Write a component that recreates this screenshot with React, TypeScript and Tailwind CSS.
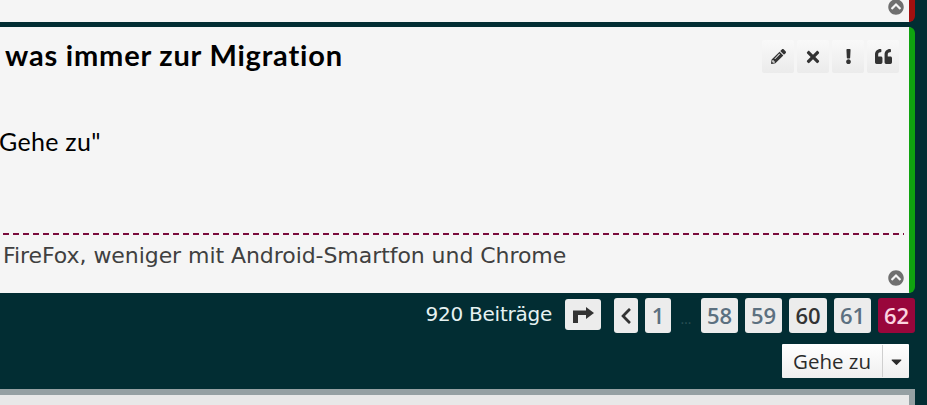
import React from "react";
import { FaChevronCircleUp, FaChevronLeft, FaExclamation, FaPencilAlt, FaQuoteLeft, FaTimes, FaCaretDown } from "react-icons/fa";

const actions = [
  { label: "Bearbeiten", icon: <FaPencilAlt size={15} /> },
  { label: "Löschen", icon: <FaTimes size={18} /> },
  { label: "Melden", icon: <FaExclamation size={15} /> },
  { label: "Zitieren", icon: <FaQuoteLeft size={17} /> },
];

const pageBtn = "flex h-[35px] items-center justify-center rounded-[3px] text-[22px] font-semibold";

const App: React.FC = () => {
  return (
    <div className="flex h-[405px] w-[927px] flex-col overflow-hidden bg-[#022d33] font-['Open_Sans',sans-serif]">
      {/* previous post, only its bottom edge is visible */}
      <div className="relative mr-[12px] h-[22px] shrink-0 rounded-br-[6px] border-r-[6px] border-[#a30f0f] bg-[#f5f5f5]">
        <FaChevronCircleUp size={16} className="absolute right-[5px] bottom-[7px] text-[#6f6f6f]" />
      </div>

      {/* post */}
      <div className="relative mt-[5px] mr-[12px] flex h-[266px] shrink-0 flex-col rounded-r-[6px] border-r-[6px] border-[#0fa30f] bg-[#f5f5f5]">
        <div className="flex items-start justify-between pt-[13px] pr-[10px]">
          <h2 className="pl-[5px] font-['Lato',sans-serif] text-[29px] leading-[30px] font-bold tracking-[0.8px] text-black">was immer zur Migration</h2>
          <div className="flex gap-[3px]">
            {actions.map((a) => (
              <button key={a.label} aria-label={a.label} className="flex h-[33px] w-[32px] items-center justify-center rounded-[2px] bg-gradient-to-b from-[#f9f9f9] to-[#ebebeb] text-[#333]">
                {a.icon}
              </button>
            ))}
          </div>
        </div>
        <p className="mt-[53px] -ml-px font-['Lato',sans-serif] text-[25px] leading-[30px] tracking-[0.3px] text-black">Gehe zu"</p>
        <div className="mt-[77px] mr-[5px] h-[2px] bg-[repeating-linear-gradient(90deg,transparent_0,transparent_3px,#7a0c3d_3px,#7a0c3d_9px,transparent_9px,transparent_10px)]" />
        <p className="mt-[8px] pl-[3px] font-['DejaVu_Sans',sans-serif] text-[22px] leading-[26px] tracking-[-0.06px] text-[#404040]">FireFox, weniger mit Android-Smartfon und Chrome</p>
        <FaChevronCircleUp size={16} className="absolute right-[5px] bottom-[7px] text-[#6f6f6f]" />
      </div>

      {/* pagination */}
      <div className="mt-[5px] mr-[12px] flex shrink-0 items-center justify-end">
        <span className="mr-[13px] -translate-y-[2px] font-['DejaVu_Sans',sans-serif] text-[20px] tracking-[-0.25px] text-[#e6f2f2]">920 Beiträge</span>
        <button aria-label="Springen" className="mr-[13px] flex h-[31px] w-[36px] -translate-y-[1px] items-center justify-center rounded-[3px] bg-[#ececec] text-[#333]">
          <svg width="21" height="16" viewBox="0 0 21 16" fill="currentColor">
            <path d="M13 0l8 6-8 6V8H5v8H0V3.500h13z" />
          </svg>
        </button>
        <button aria-label="Zurück" className={`${pageBtn} mr-[7px] w-[24px] bg-[#ececec] text-[#333]`}>
          <FaChevronLeft size={18} />
        </button>
        <button className={`${pageBtn} w-[26px] bg-[#ececec] text-[#5c7080]`}>1</button>
        <span className="w-[30px] pt-[6px] text-center text-[14px] text-[#2a5055]">…</span>
        <div className="flex gap-[7px]">
          <button className={`${pageBtn} w-[37px] bg-[#ececec] text-[#5c7080]`}>58</button>
          <button className={`${pageBtn} w-[37px] bg-[#ececec] text-[#5c7080]`}>59</button>
          <button className={`${pageBtn} w-[38px] bg-[#ececec] text-[#333]`}>60</button>
          <button className={`${pageBtn} w-[37px] bg-[#ececec] text-[#5c7080]`}>61</button>
          <button className={`${pageBtn} w-[37px] bg-[#99063b] font-normal text-[#fbd4e0]`}>62</button>
        </div>
      </div>

      <div className="mt-[11px] mr-[18px] flex shrink-0 justify-end">
        <button className="flex h-[34px] w-[127px] items-center rounded-[1px] bg-gradient-to-b from-white to-[#efefef] text-[#2b2b2b]">
          <span className="w-[101px] border-r border-[#cfcfcf] text-center text-[20.5px] leading-[32px] font-medium">Gehe zu</span>
          <span className="flex flex-1 justify-center"><FaCaretDown size={17} /></span>
        </button>
      </div>

      {/* next block */}
      <div className="mt-[11px] mr-[12px] min-h-0 flex-1 border-t-[6px] border-r-[6px] border-[#95a0a3] bg-[#e8e8e8]" />
    </div>
  );
};

export default App;
